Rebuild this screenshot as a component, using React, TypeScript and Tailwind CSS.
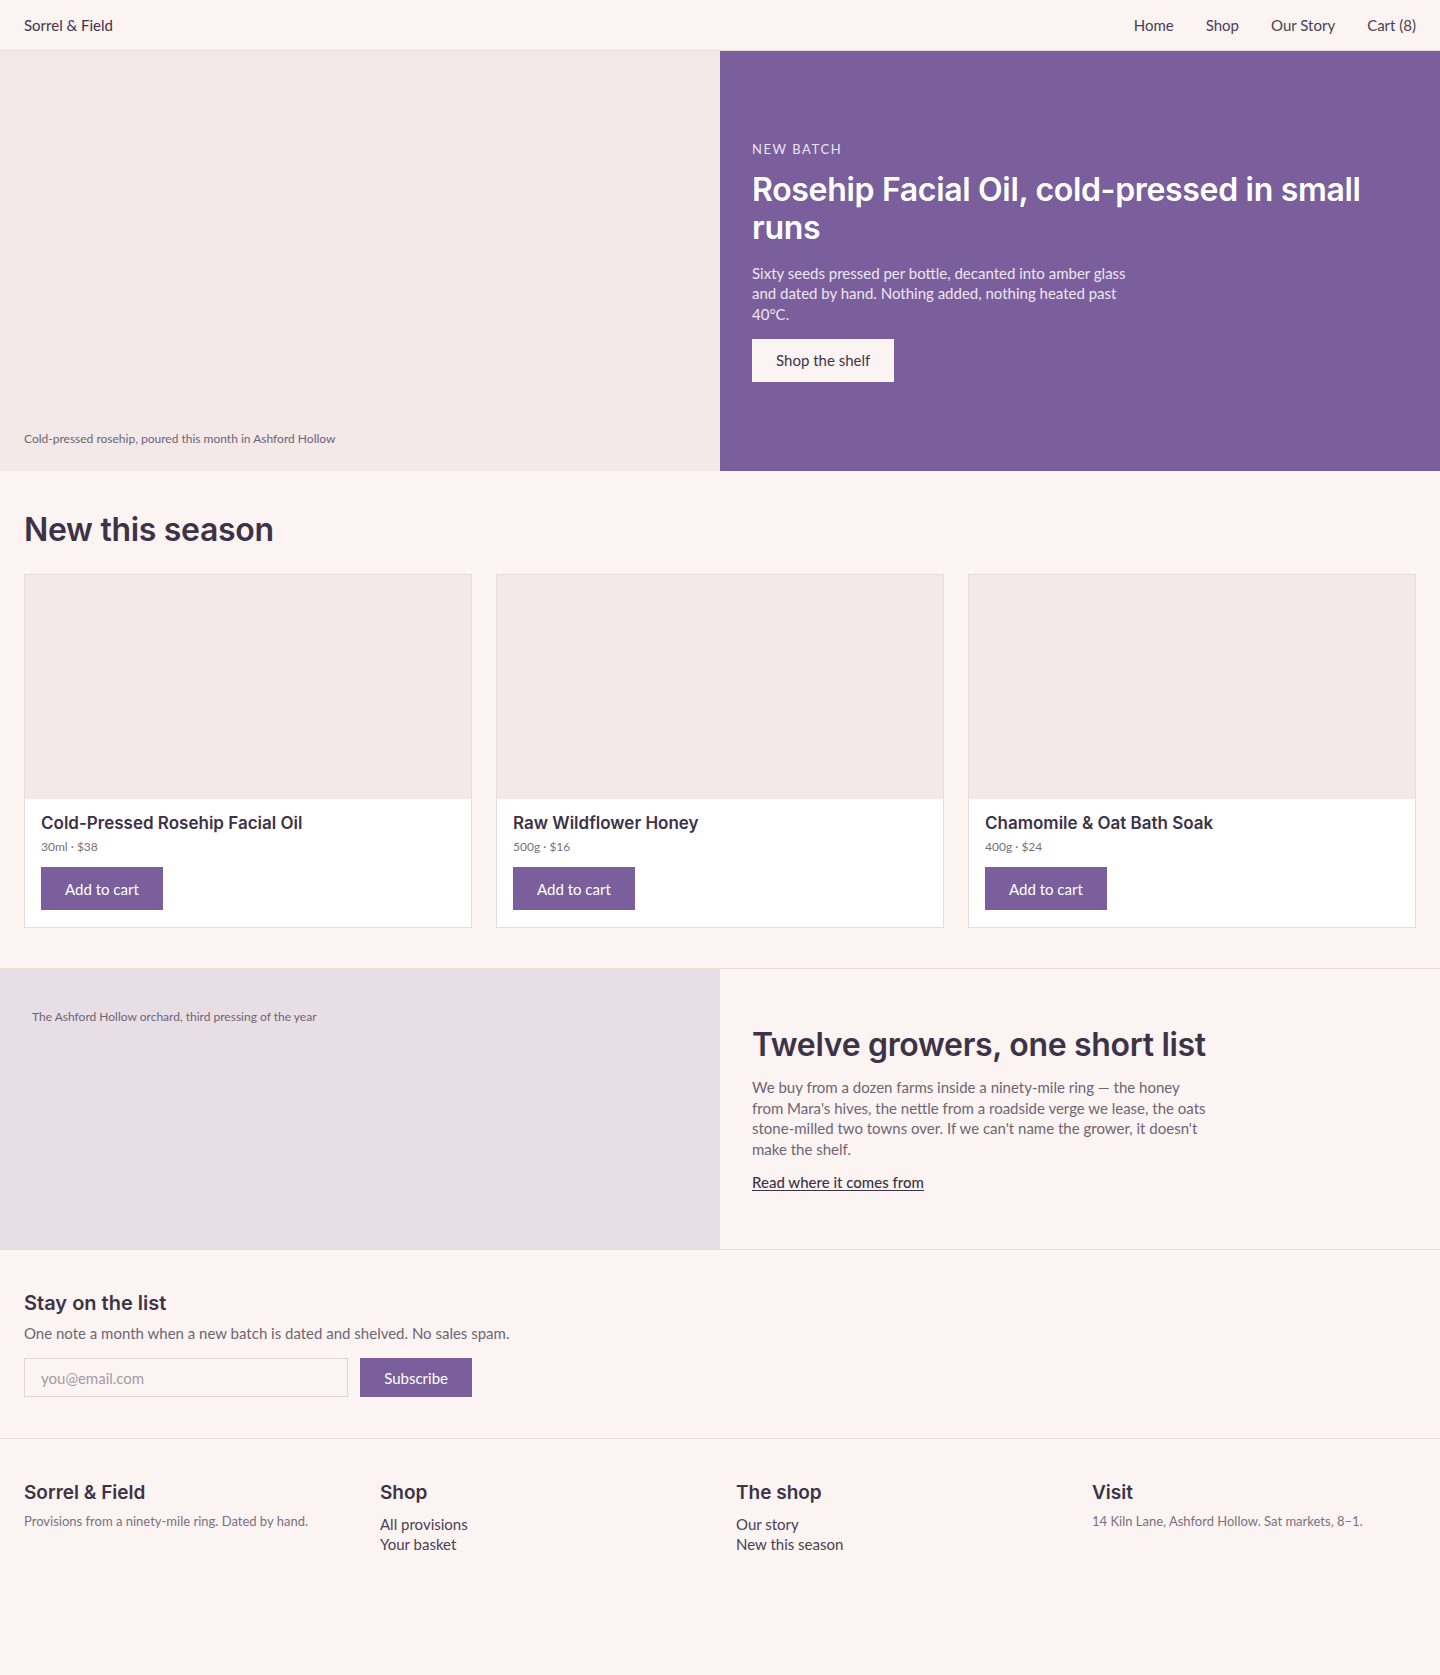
import React from 'react';

const body = "font-['Lato','Noto_Sans',sans-serif]";
const display = "font-['Inter','Noto_Sans',sans-serif]";

const products = [
  { name: 'Cold-Pressed Rosehip Facial Oil', meta: '30ml · $38' },
  { name: 'Raw Wildflower Honey', meta: '500g · $16' },
  { name: 'Chamomile & Oat Bath Soak', meta: '400g · $24' },
];

const footerCols = [
  { title: 'Shop', links: ['All provisions', 'Your basket'] },
  { title: 'The shop', links: ['Our story', 'New this season'] },
];

const App: React.FC = () => {
  return (
    <div className={`min-h-screen bg-[#fcf4f2] text-[#3d3347] ${body}`}>
      {/* Top bar */}
      <header className="h-[51px] flex items-center justify-between px-6 border-b border-[#e6dcdc]">
        <a className="text-[15px] text-[#3d3347]">Sorrel &amp; Field</a>
        <nav className="flex items-center gap-8 text-[15px] text-[#4a4052]">
          <a>Home</a>
          <a>Shop</a>
          <a>Our Story</a>
          <a>Cart (8)</a>
        </nav>
      </header>

      {/* Hero */}
      <section className="grid grid-cols-2 h-[420px]">
        <div className="bg-[#f2e9e8] flex items-end px-6 pb-6">
          <p className="text-xs text-[#6e6474]">Cold-pressed rosehip, poured this month in Ashford Hollow</p>
        </div>
        <div className="bg-[#7a5f9c] flex flex-col justify-center px-8 text-white">
          <span className="text-[13px] tracking-[0.12em] uppercase text-[#ece4f2]">New batch</span>
          <h1 className={`${display} mt-3 text-[32px] leading-[1.18] font-semibold tracking-[-0.01em]`}>
            Rosehip Facial Oil, cold-pressed in small runs
          </h1>
          <p className="mt-4 max-w-[375px] text-[15px] leading-[1.36] text-[#eee6f3]">
            Sixty seeds pressed per bottle, decanted into amber glass and dated by hand. Nothing added, nothing heated past 40°C.
          </p>
          <div className="mt-[15px]">
            <button className="bg-[#fcf4f2] text-[#3d3347] text-[15px] px-6 h-[43px]">Shop the shelf</button>
          </div>
        </div>
      </section>

      {/* Products */}
      <section className="px-6 pt-[39px] pb-10">
        <h2 className={`${display} text-[32px] font-semibold tracking-[-0.01em] leading-tight`}>New this season</h2>
        <div className="mt-6 grid grid-cols-3 gap-6">
          {products.map((p) => (
            <div key={p.name} className="bg-white border border-[#e6dcdc]">
              <div className="h-[224px] bg-[#f2e9e8]" />
              <div className="px-4 pt-[13px] pb-[17px]">
                <h3 className={`${display} text-[17px] font-semibold leading-snug`}>{p.name}</h3>
                <p className="mt-1 text-xs text-[#7a7080]">{p.meta}</p>
                <button className="mt-3 bg-[#7a5f9c] text-white text-[15px] px-6 h-[43px]">Add to cart</button>
              </div>
            </div>
          ))}
        </div>
      </section>

      {/* Growers story */}
      <section className="grid grid-cols-2 h-[282px] border-y border-[#e6dcdc]">
        <div className="bg-[#e8dfe6] px-8 pt-10">
          <p className="text-xs text-[#6e6474]">The Ashford Hollow orchard, third pressing of the year</p>
        </div>
        <div className="flex flex-col justify-center px-8">
          <h2 className={`${display} text-[32px] font-semibold tracking-[-0.01em] leading-tight`}>Twelve growers, one short list</h2>
          <p className="mt-3 max-w-[462px] text-[15px] leading-[1.36] text-[#6e6474]">
            We buy from a dozen farms inside a ninety-mile ring — the honey from Mara's hives, the nettle from a roadside verge we lease, the oats stone-milled two towns over. If we can't name the grower, it doesn't make the shelf.
          </p>
          <a className="mt-3 text-[15px] font-medium underline underline-offset-2">Read where it comes from</a>
        </div>
      </section>

      {/* Newsletter */}
      <section className="px-6 pt-10 pb-[41px] border-b border-[#e6dcdc]">
        <h3 className={`${display} text-[20px] font-semibold leading-snug`}>Stay on the list</h3>
        <p className="mt-1 text-[15px] text-[#6e6474]">One note a month when a new batch is dated and shelved. No sales spam.</p>
        <form className="mt-[14px] flex gap-3 max-w-[448px]" onSubmit={(e) => e.preventDefault()}>
          <input
            type="email"
            placeholder="you@email.com"
            className="flex-1 h-[39px] px-4 border border-[#e0d6d6] bg-[#fcf4f2] text-[15px] placeholder:text-[#a49aa8] outline-none"
          />
          <button className="bg-[#7a5f9c] text-white text-[15px] px-6 h-[39px]">Subscribe</button>
        </form>
      </section>

      {/* Footer */}
      <footer className="px-6 pt-10 pb-10 grid grid-cols-4 gap-8">
        <div>
          <h4 className={`${display} text-[19px] font-semibold`}>Sorrel &amp; Field</h4>
          <p className="mt-1 text-[13px] text-[#7a7080]">Provisions from a ninety-mile ring. Dated by hand.</p>
        </div>
        {footerCols.map((c) => (
          <div key={c.title}>
            <h4 className={`${display} text-[19px] font-semibold`}>{c.title}</h4>
            <ul className="mt-[6px] text-[15px] leading-[1.36] text-[#4a4052]">
              {c.links.map((l) => (
                <li key={l}>{l}</li>
              ))}
            </ul>
          </div>
        ))}
        <div>
          <h4 className={`${display} text-[19px] font-semibold`}>Visit</h4>
          <p className="mt-1 text-[13px] text-[#7a7080]">14 Kiln Lane, Ashford Hollow. Sat markets, 8–1.</p>
        </div>
      </footer>
    </div>
  );
};

export default App;
